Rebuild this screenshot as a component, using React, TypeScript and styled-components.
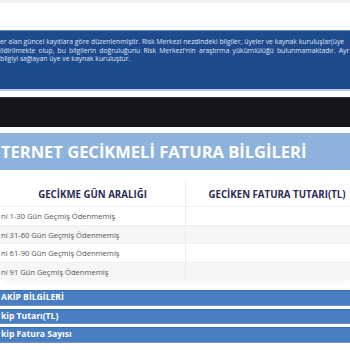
import React from 'react'
import styled, { createGlobalStyle } from 'styled-components'

const GlobalStyle = createGlobalStyle`
  html, body {
    margin: 0;
    padding: 0;
    background: #ffffff;
    overflow: hidden;
  }
  body {
    font-family: 'Open Sans', 'Noto Sans', 'DejaVu Sans', sans-serif;
  }
`

const rows = [
  'ni 1-30 Gün Geçmiş Ödenmemiş',
  'ni 31-60 Gün Geçmiş Ödenmemiş',
  'ni 61-90 Gün Geçmiş Ödenmemiş',
  'ni 91 Gün Geçmiş Ödenmemiş',
]

const bars = ['AKİP BİLGİLERİ', 'kip Tutarı(TL)', 'kip Fatura Sayısı']

const App = () => (
  <Page>
    <GlobalStyle />
    <TopStrip />
    <Notice>
      <NoticeLine>
        er alan güncel kayıtlara göre düzenlenmiştir. Risk Merkezi nezdindeki bilgiler, üyeler ve kaynak kuruluşlar(üye
      </NoticeLine>
      <NoticeLine $spread>
        ildirilmekte olup, bu bilgilerin doğruluğunu Risk Merkezi'nin araştırma yükümlülüğü bulunmamaktadır. Ayr
      </NoticeLine>
      <NoticeLine>bilgiyi sağlayan üye ve kaynak kuruluştur.</NoticeLine>
    </Notice>
    <DarkBar />
    <TitleBar>TERNET GECİKMELİ FATURA BİLGİLERİ</TitleBar>
    <Table>
      <HeadCell>GECİKME GÜN ARALIĞI</HeadCell>
      <HeadCell $right>GECİKEN FATURA TUTARI(TL)</HeadCell>
      {rows.map((r, i) => (
        <React.Fragment key={r}>
          <Cell $alt={i % 2 === 1}>{r}</Cell>
          <Cell $alt={i % 2 === 1} $right />
        </React.Fragment>
      ))}
    </Table>
    <Bars>
      {bars.map(b => (
        <Bar key={b}>{b}</Bar>
      ))}
    </Bars>
  </Page>
)

const Page = styled.div`
  width: 350px;
  height: 350px;
  display: flex;
  flex-direction: column;
`
const TopStrip = styled.div`
  height: 23px;
  border-top: 3px solid #f2f2f2;
  border-bottom: 1px solid #f0f0f0;
  margin-bottom: 3px;
`
const Notice = styled.div`
  box-sizing: border-box;
  height: 61px;
  background: #1f4a8d;
  border-top: 1px solid #6f8fc0;
  border-bottom: 2px solid #b6c9e6;
  padding: 7px 0 0 0;
  color: #dfe7f4;
  font-size: 6.8px;
  line-height: 8.7px;
  overflow: hidden;
`
const NoticeLine = styled.div<{ $spread?: boolean }>`
  white-space: nowrap;
  word-spacing: ${({ $spread }) => ($spread ? '1.35px' : '0')};
`
const DarkBar = styled.div`
  margin-top: 6px;
  height: 29px;
  background: #16171b;
  border-top: 1px solid #3a3b40;
`
const TitleBar = styled.div`
  margin-top: 6px;
  height: 37px;
  background: #8db3dc;
  color: #ffffff;
  font-weight: 700;
  font-size: 16.5px;
  line-height: 37px;
  padding-left: 1px;
  white-space: nowrap;
  overflow: hidden;
`
const Table = styled.div`
  margin-top: 11px;
  display: grid;
  grid-template-columns: 185px 1fr;
  box-shadow: 0 4px 6px -3px rgba(0, 0, 0, 0.06);
`
const HeadCell = styled.div<{ $right?: boolean }>`
  height: 25px;
  line-height: 27px;
  color: #2c2c58;
  font-weight: 700;
  font-size: 9.7px;
  text-align: center;
  white-space: nowrap;
  padding-left: ${({ $right }) => ($right ? '18px' : '0')};
  border-left: ${({ $right }) => ($right ? '1px solid #ececec' : 'none')};
`
const Cell = styled.div<{ $alt?: boolean; $right?: boolean }>`
  box-sizing: border-box;
  height: 18.5px;
  line-height: 18.5px;
  background: ${({ $alt }) => ($alt ? '#f6f6f6' : '#ffffff')};
  border-top: 1px solid #f0f0f0;
  border-left: ${({ $right }) => ($right ? '1px solid #ececec' : 'none')};
  color: #555555;
  font-size: 7.6px;
  padding-left: 1px;
  white-space: nowrap;
`
const Bars = styled.div`
  margin-top: 10px;
  display: flex;
  flex-direction: column;
  gap: 3px;
`
const Bar = styled.div`
  box-sizing: border-box;
  height: 15.5px;
  background: #4a7ec2;
  border-top: 1px solid #3f6fae;
  border-bottom: 1px solid #6b93c9;
  color: #ffffff;
  font-weight: 700;
  font-size: 8.6px;
  line-height: 13.5px;
  padding-left: 1px;
  white-space: nowrap;
`

export default App
